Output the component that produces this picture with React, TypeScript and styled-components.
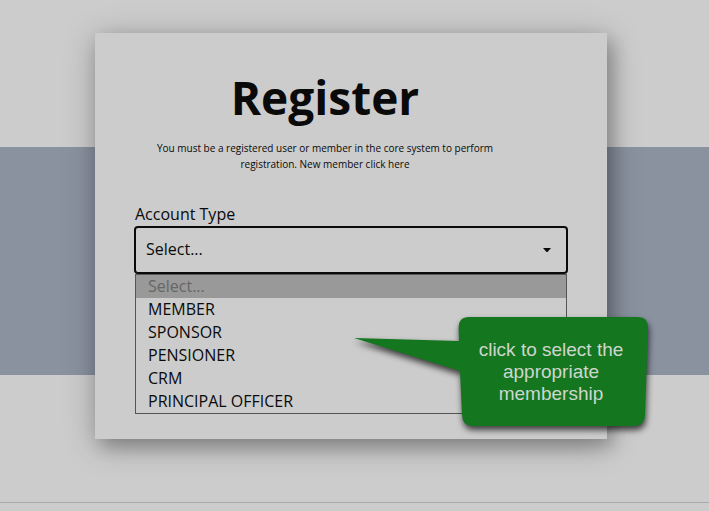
import React from "react";
import styled, { createGlobalStyle } from "styled-components";

const GlobalStyle = createGlobalStyle`
  *, *::before, *::after { box-sizing: border-box; }
  body {
    margin: 0;
    background: #cccccc;
    color: #0a0a0a;
    font-family: "Open Sans", "Noto Sans", sans-serif;
    font-size: 16px;
  }
`;

const Page = styled.div`
  min-height: 100vh;
  display: flex;
  flex-direction: column;
`;

const Hero = styled.main`
  display: grid;
  grid-template-columns: minmax(0, 1fr);
  grid-template-rows: 147px 228px minmax(127px, auto);
`;

const Band = styled.div`
  grid-area: 2 / 1;
  background: #8a92a0;
`;

const CardArea = styled.div`
  grid-area: 1 / 1 / 4 / 2;
  display: flex;
  justify-content: center;
  align-items: flex-start;
  padding: 33px 7px 63px 0;
`;

const Card = styled.section`
  position: relative;
  width: 100%;
  max-width: 512px;
  padding: 32px 40px 25px;
  background: #cccccc;
  box-shadow: 6px 8px 16px rgba(0, 0, 0, 0.2), 1px 6px 30px rgba(0, 0, 0, 0.28);
`;

const Intro = styled.header`
  max-width: 380px;
  text-align: center;
`;

const Title = styled.h1`
  margin: 0;
  font-size: 46px;
  line-height: 64px;
  font-weight: 700;
`;

const Note = styled.p`
  margin: 11px 16px 0;
  font-size: 10px;
  line-height: 16px;
`;

const Form = styled.form`
  margin-top: 30px;
`;

const Label = styled.label`
  display: block;
  line-height: 24px;
`;

const SelectBox = styled.div`
  display: grid;
  align-items: center;
  margin: 0 -1px;
`;

const Select = styled.select`
  grid-area: 1 / 1;
  appearance: none;
  width: 100%;
  height: 48px;
  padding: 0 32px 2px 10px;
  border: 2px solid #0a0a0a;
  border-radius: 4px;
  outline: none;
  background: transparent;
  color: inherit;
  font: inherit;
`;

const Caret = styled.svg`
  grid-area: 1 / 1;
  justify-self: end;
  width: 8px;
  height: 4px;
  margin-right: 17px;
  pointer-events: none;
`;

const Options = styled.ul`
  margin: 0;
  padding: 0;
  list-style: none;
  border: 1px solid #555555;
`;

const Option = styled.li<{ $placeholder?: boolean }>`
  padding: 0 12px;
  line-height: 23px;
  background: ${(p) => (p.$placeholder ? "#999999" : "transparent")};
  color: ${(p) => (p.$placeholder ? "#666666" : "inherit")};
`;

const Callout = styled.aside`
  position: absolute;
  top: 284px;
  right: -42px;
  width: 190px;
  height: 110px;
  padding: 22px 18px 22px 12px;
  color: #cfd6cf;
  font-family: "Liberation Sans", Arial, sans-serif;
  font-size: 19px;
  line-height: 22px;
  text-align: center;
`;

const Bubble = styled.svg`
  position: absolute;
  top: 0;
  right: 0;
  width: 295px;
  height: 110px;
  overflow: visible;
  filter: drop-shadow(1px 4px 3px rgba(0, 0, 0, 0.7));
`;

const CalloutText = styled.p`
  position: relative;
  margin: 0;
`;

const Footer = styled.footer`
  flex: 1;
  border-top: 1px solid #a8aab0;
`;

const accountTypes = ["MEMBER", "SPONSOR", "PENSIONER", "CRM", "PRINCIPAL OFFICER"];

export default function App() {
  return (
    <Page>
      <GlobalStyle />
      <Hero>
        <Band />
        <CardArea>
          <Card>
            <Intro>
              <Title>Register</Title>
              <Note>
                You must be a registered user or member in the core system to perform
                registration. New member click here
              </Note>
            </Intro>
            <Form>
              <Label htmlFor="account-type">Account Type</Label>
              <SelectBox>
                <Select id="account-type" defaultValue="">
                  <option value="">Select...</option>
                  {accountTypes.map((type) => (
                    <option key={type} value={type}>{type}</option>
                  ))}
                </Select>
                <Caret viewBox="0 0 8 4" aria-hidden="true">
                  <path d="M0 0H8L4.5 4H3.5Z" fill="#0a0a0a" />
                </Caret>
              </SelectBox>
              <Options role="listbox" aria-label="Account Type">
                <Option role="option" aria-selected="true" $placeholder>Select...</Option>
                {accountTypes.map((type) => (
                  <Option key={type} role="option" aria-selected="false">{type}</Option>
                ))}
              </Options>
            </Form>
            <Callout>
              <Bubble viewBox="0 0 295 110" aria-hidden="true">
                <path
                  d="M0 21L105 24L104.6 11Q104.5 0 115 0H284Q294.300 0 294 11L291 98Q290.500 109 280 109H118Q108.500 109 108 98L106 54Z"
                  fill="#14761e"
                />
              </Bubble>
              <CalloutText>click to select the appropriate membership</CalloutText>
            </Callout>
          </Card>
        </CardArea>
      </Hero>
      <Footer />
    </Page>
  );
}
